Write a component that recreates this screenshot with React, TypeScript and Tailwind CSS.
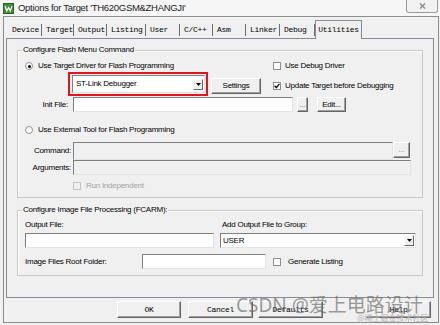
import type { ReactNode } from 'react'

const tabs = [
  { label: 'Device', w: 'w-[34px]' },
  { label: 'Target', w: 'w-[32px]' },
  { label: 'Output', w: 'w-[33px]' },
  { label: 'Listing', w: 'w-[39px]' },
  { label: 'User', w: 'w-[34px]' },
  { label: 'C/C++', w: 'w-[33px]' },
  { label: 'Asm', w: 'w-[33px]' },
  { label: 'Linker', w: 'w-[34px]' },
  { label: 'Debug', w: 'w-[35px]' },
]

const mono = "font-['Liberation_Mono','DejaVu_Sans_Mono',monospace] text-[8px] tracking-[-0.3px]"

function Btn({ children, className = '' }: { children?: ReactNode; className?: string }) {
  return (
    <div
      className={`flex items-center justify-center bg-[#f0f0f0] border border-t-white border-l-white border-r-[#646464] border-b-[#646464] shadow-[inset_-1px_-1px_0_#a0a0a0] ${className}`}
    >
      {children}
    </div>
  )
}

function Check({ checked = false, disabled = false }: { checked?: boolean; disabled?: boolean }) {
  return (
    <span
      className={`w-[8px] h-[8px] border flex items-center justify-center shrink-0 ${
        disabled ? 'border-[#c4c4c4] bg-[#f0f0f0]' : 'border-[#8e8f8f] bg-white'
      }`}
    >
      {checked && (
        <svg width="6" height="6" viewBox="0 0 6 6">
          <path d="M0.6 2.8 L2.3 4.6 L5.4 0.9" stroke="#111" strokeWidth="1.4" fill="none" />
        </svg>
      )}
    </span>
  )
}

function Radio({ checked = false }: { checked?: boolean }) {
  return (
    <span className="w-[8px] h-[8px] rounded-full border border-[#8e8f8f] bg-white flex items-center justify-center shrink-0">
      {checked && <span className="w-[3px] h-[3px] rounded-full bg-black" />}
    </span>
  )
}

function Field({ className = '', disabled = false, children }: { className?: string; disabled?: boolean; children?: ReactNode }) {
  return (
    <div
      className={`border border-t-[#7f7f7f] border-l-[#7f7f7f] border-r-[#e3e3e3] border-b-[#e3e3e3] flex items-center ${
        disabled ? 'bg-[#f0f0f0]' : 'bg-white'
      } ${className}`}
    >
      {children}
    </div>
  )
}

function Arrow() {
  return (
    <div className="ml-auto mr-[1px] w-[10px] h-[11px] bg-[#f0f0f0] border border-t-white border-l-white border-r-[#646464] border-b-[#646464] flex items-center justify-center">
      <svg width="5" height="3" viewBox="0 0 5 3">
        <path d="M0 0h5L2.5 3z" fill="#000" />
      </svg>
    </div>
  )
}

export default function App() {
  return (
    <div className="w-[440px] h-[325px] bg-[#f0f0f0] overflow-hidden relative font-['Liberation_Sans',Arial,sans-serif] text-[8px] tracking-[-0.25px] text-black leading-[10px]">
      {/* Title bar */}
      <div className="h-[16px] flex items-center pl-[3px] bg-[#f6f6f6]">
        <svg width="11" height="11" viewBox="0 0 11 11" className="shrink-0">
          <rect x="0.5" y="0.5" width="10" height="10" fill="#3f8f3a" stroke="#2a5f27" />
          <path d="M2 3 L3.8 8 L5.5 4.5 L7.2 8 L9 3" stroke="#fff" strokeWidth="1.2" fill="none" />
        </svg>
        <span className="ml-[4px] text-[9.5px] tracking-[-0.3px] text-[#222]">
          Options for Target 'TH620GSM&amp;ZHANGJI'
        </span>
        <div className="ml-auto mr-[2px] self-start w-[32px] h-[13px] border border-[#9a9a9a] border-t-0 rounded-b-[3px] bg-[#f2f2f2] flex items-center justify-center">
          <svg width="7" height="6" viewBox="0 0 7 6">
            <path d="M1 0.5 L6 5.5 M6 0.5 L1 5.5" stroke="#8a8a8a" strokeWidth="1.4" />
          </svg>
        </div>
      </div>

      {/* Client area */}
      <div className="ml-[3px] w-[436px] h-[307px] border border-[#8d8d8d]">
        {/* Tab strip */}
        <div className={`flex items-end h-[21px] pl-[4px] ${mono}`}>
          {tabs.map((t) => (
            <div key={t.label} className={`${t.w} h-[16px] flex items-center pl-[4px]`}>
              <span>{t.label}</span>
              <span className="ml-auto h-[12px] w-px bg-[#6d6d6d]" />
            </div>
          ))}
          <div className="relative z-10 w-[47px] h-[19px] -mb-px flex items-center justify-center bg-[#f0f0f0] border border-b-0 border-[#898c95]">
            Utilities
          </div>
        </div>

        {/* Tab page */}
        <div className="ml-[2px] w-[428px] h-[260px] border border-[#898c95] bg-[#f0f0f0]">
          <fieldset className="ml-[10px] mt-[6px] w-[406px] h-[153px] border border-[#c9c9c9] shadow-[inset_1px_1px_0_#fff]">
            <legend className="ml-[4px] px-[1px] leading-[10px]">Configure Flash Menu Command</legend>

            <div className="flex items-center h-[10px] mt-[6px]">
              <div className="w-[255px] pl-[7px] flex items-center gap-[5px]">
                <Radio checked />
                <span>Use Target Driver for Flash Programming</span>
              </div>
              <Check />
              <span className="ml-[4px]">Use Debug Driver</span>
            </div>

            <div className="flex items-start h-[24px] mt-[1px]">
              <div className="ml-[50px] w-[140px] h-[24px] border-2 border-[#e3141b] flex items-center pl-[2px]">
                <Field className="w-[133px] h-[18px] pl-[3px]">
                  <span>ST-Link Debugger</span>
                  <Arrow />
                </Field>
              </div>
              <Btn className="ml-[3px] mt-[6px] w-[50px] h-[16px]">Settings</Btn>
              <div className="ml-[12px] mt-[9px] h-[9px] flex items-center">
                <Check checked />
                <span className="ml-[4px]">Update Target before Debugging</span>
              </div>
            </div>

            <div className="flex items-center h-[15px] mt-[1px]">
              <span className="w-[50px] text-right">Init File:</span>
              <Field className="ml-[5px] w-[220px] h-[15px]" />
              <Btn className="ml-[4px] w-[11px] h-[15px] text-[#777]">...</Btn>
              <Btn className="ml-[9px] w-[29px] h-[15px]">Edit...</Btn>
            </div>

            <div className="flex items-center h-[10px] mt-[13px] pl-[7px] gap-[5px]">
              <Radio />
              <span>Use External Tool for Flash Programming</span>
            </div>

            <div className="flex items-start h-[18px] mt-[7px]">
              <span className="w-[53px] text-right leading-[18px]">Command:</span>
              <Field disabled className="ml-[2px] w-[320px] h-[18px]" />
              <Btn className="w-[17px] h-[16px] text-[#888]">...</Btn>
            </div>
            <div className="flex items-center h-[15px]">
              <span className="w-[53px] text-right">Arguments:</span>
              <Field disabled className="ml-[2px] w-[338px] h-[15px]" />
            </div>

            <div className="flex items-center h-[8px] mt-[7px] pl-[55px]">
              <Check disabled />
              <span className="ml-[5px] text-[#a3a3a3]">Run Independent</span>
            </div>
          </fieldset>

          <fieldset className="ml-[10px] mt-[7px] w-[406px] h-[71px] border border-[#c9c9c9] shadow-[inset_1px_1px_0_#fff]">
            <legend className="ml-[4px] px-[1px] leading-[10px]">Configure Image File Processing (FCARM):</legend>

            <div className="flex items-center h-[10px] mt-[5px]">
              <span className="w-[204px] pl-[7px]">Output File:</span>
              <span>Add Output File to Group:</span>
            </div>

            <div className="flex items-center h-[15px] mt-[3px]">
              <Field className="ml-[7px] w-[189px] h-[15px]" />
              <Field className="ml-[6px] w-[196px] h-[15px] pl-[2px]">
                <span>USER</span>
                <Arrow />
              </Field>
            </div>

            <div className="flex items-center h-[15px] mt-[6px]">
              <span className="w-[124px] pl-[7px]">Image Files Root Folder:</span>
              <Field className="w-[124px] h-[15px]" />
              <span className="ml-[7px]">
                <Check />
              </span>
              <span className="ml-[7px]">Generate Listing</span>
            </div>
          </fieldset>
        </div>

        {/* Dialog buttons */}
        <div className={`flex h-[17px] mt-[3px] ${mono}`}>
          <Btn className="ml-[113px] w-[64px] h-[17px]">OK</Btn>
          <Btn className="ml-[7px] w-[65px] h-[17px]">Cancel</Btn>
          <Btn className="ml-[5px] w-[65px] h-[17px]">Defaults</Btn>
          <Btn className="ml-[43px] w-[65px] h-[17px]">Help</Btn>
        </div>
      </div>

      {/* CSDN watermark */}
      <div className="absolute left-[236px] top-[294px] text-[19px] leading-[22px] tracking-normal font-['Noto_Sans','Noto_Sans_CJK_SC',sans-serif] text-[#6f6f6f]/70 whitespace-nowrap">
        CSDN @爱上电路设计
      </div>
      <div className="absolute left-[357px] top-[313px] text-[8px] leading-[10px] tracking-normal font-['Noto_Sans_CJK_SC',sans-serif] text-[#b0b0b0] whitespace-nowrap">
        @稀土掘金技术社区
      </div>
    </div>
  )
}
